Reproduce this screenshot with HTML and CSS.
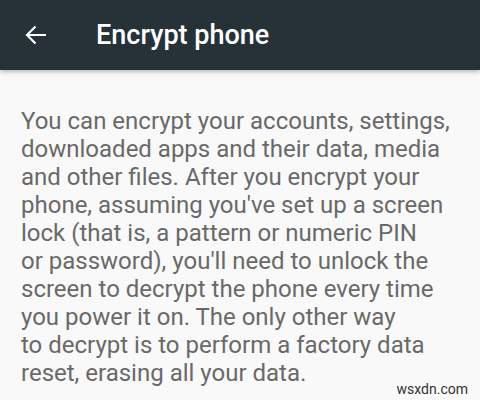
FILE: index.html
```html
<!DOCTYPE html>
<html lang="en">
<head>
  <meta charset="UTF-8" />
  <meta name="viewport" content="width=device-width, initial-scale=1.0" />
  <title>Encrypt phone</title>
  <link rel="stylesheet" href="styles.css">
</head>
<body>
  <header class="toolbar">
    <button class="back" aria-label="Back">
      <svg width="24" height="24" viewBox="0 0 24 24">
        <path d="M22 12H3M11.5 3.5L3 12l8.5 8.5" fill="none" stroke="#fff" stroke-width="2.2"/>
      </svg>
    </button>
    <h1>Encrypt phone</h1>
  </header>
  <main class="content">
    <p class="summary">
      You can encrypt your accounts, settings,<br>
      downloaded apps and their data, media<br>
      and other files. After you encrypt your<br>
      phone, assuming you've set up a screen<br>
      lock (that is, a pattern or numeric PIN<br>
      or password), you'll need to unlock the<br>
      screen to decrypt the phone every time<br>
      you power it on. The only other way<br>
      to decrypt is to perform a factory data<br>
      reset, erasing all your data.
    </p>
  </main>
  <span class="watermark">wsxdn.com</span>
</body>
</html>
```

FILE: styles.css
```css
body {
  margin: 0;
  font-family: Roboto, "Noto Sans", sans-serif;
  background: #f9f9f9;
  height: 400px;
  overflow: hidden;
  position: relative;
}
.toolbar {
  display: flex;
  align-items: center;
  height: 70px;
  background: #263238;
  box-shadow: 0 2px 4px rgba(0,0,0,0.25);
}
.back {
  display: flex;
  align-items: center;
  justify-content: center;
  width: 48px;
  height: 48px;
  margin-left: 12px;
  padding: 0;
  border: none;
  background: none;
}
h1 {
  margin: 0 0 0 36px;
  color: #fff;
  font-size: 27px;
  font-weight: 500;
}
.content {
  padding: 37px 21px 0;
}
.summary {
  margin: 0;
  color: #696969;
  font-size: 24px;
  line-height: 28px;
}
.watermark {
  position: absolute;
  right: 12px;
  bottom: 3px;
  font-size: 14px;
  color: #333;
}
```
